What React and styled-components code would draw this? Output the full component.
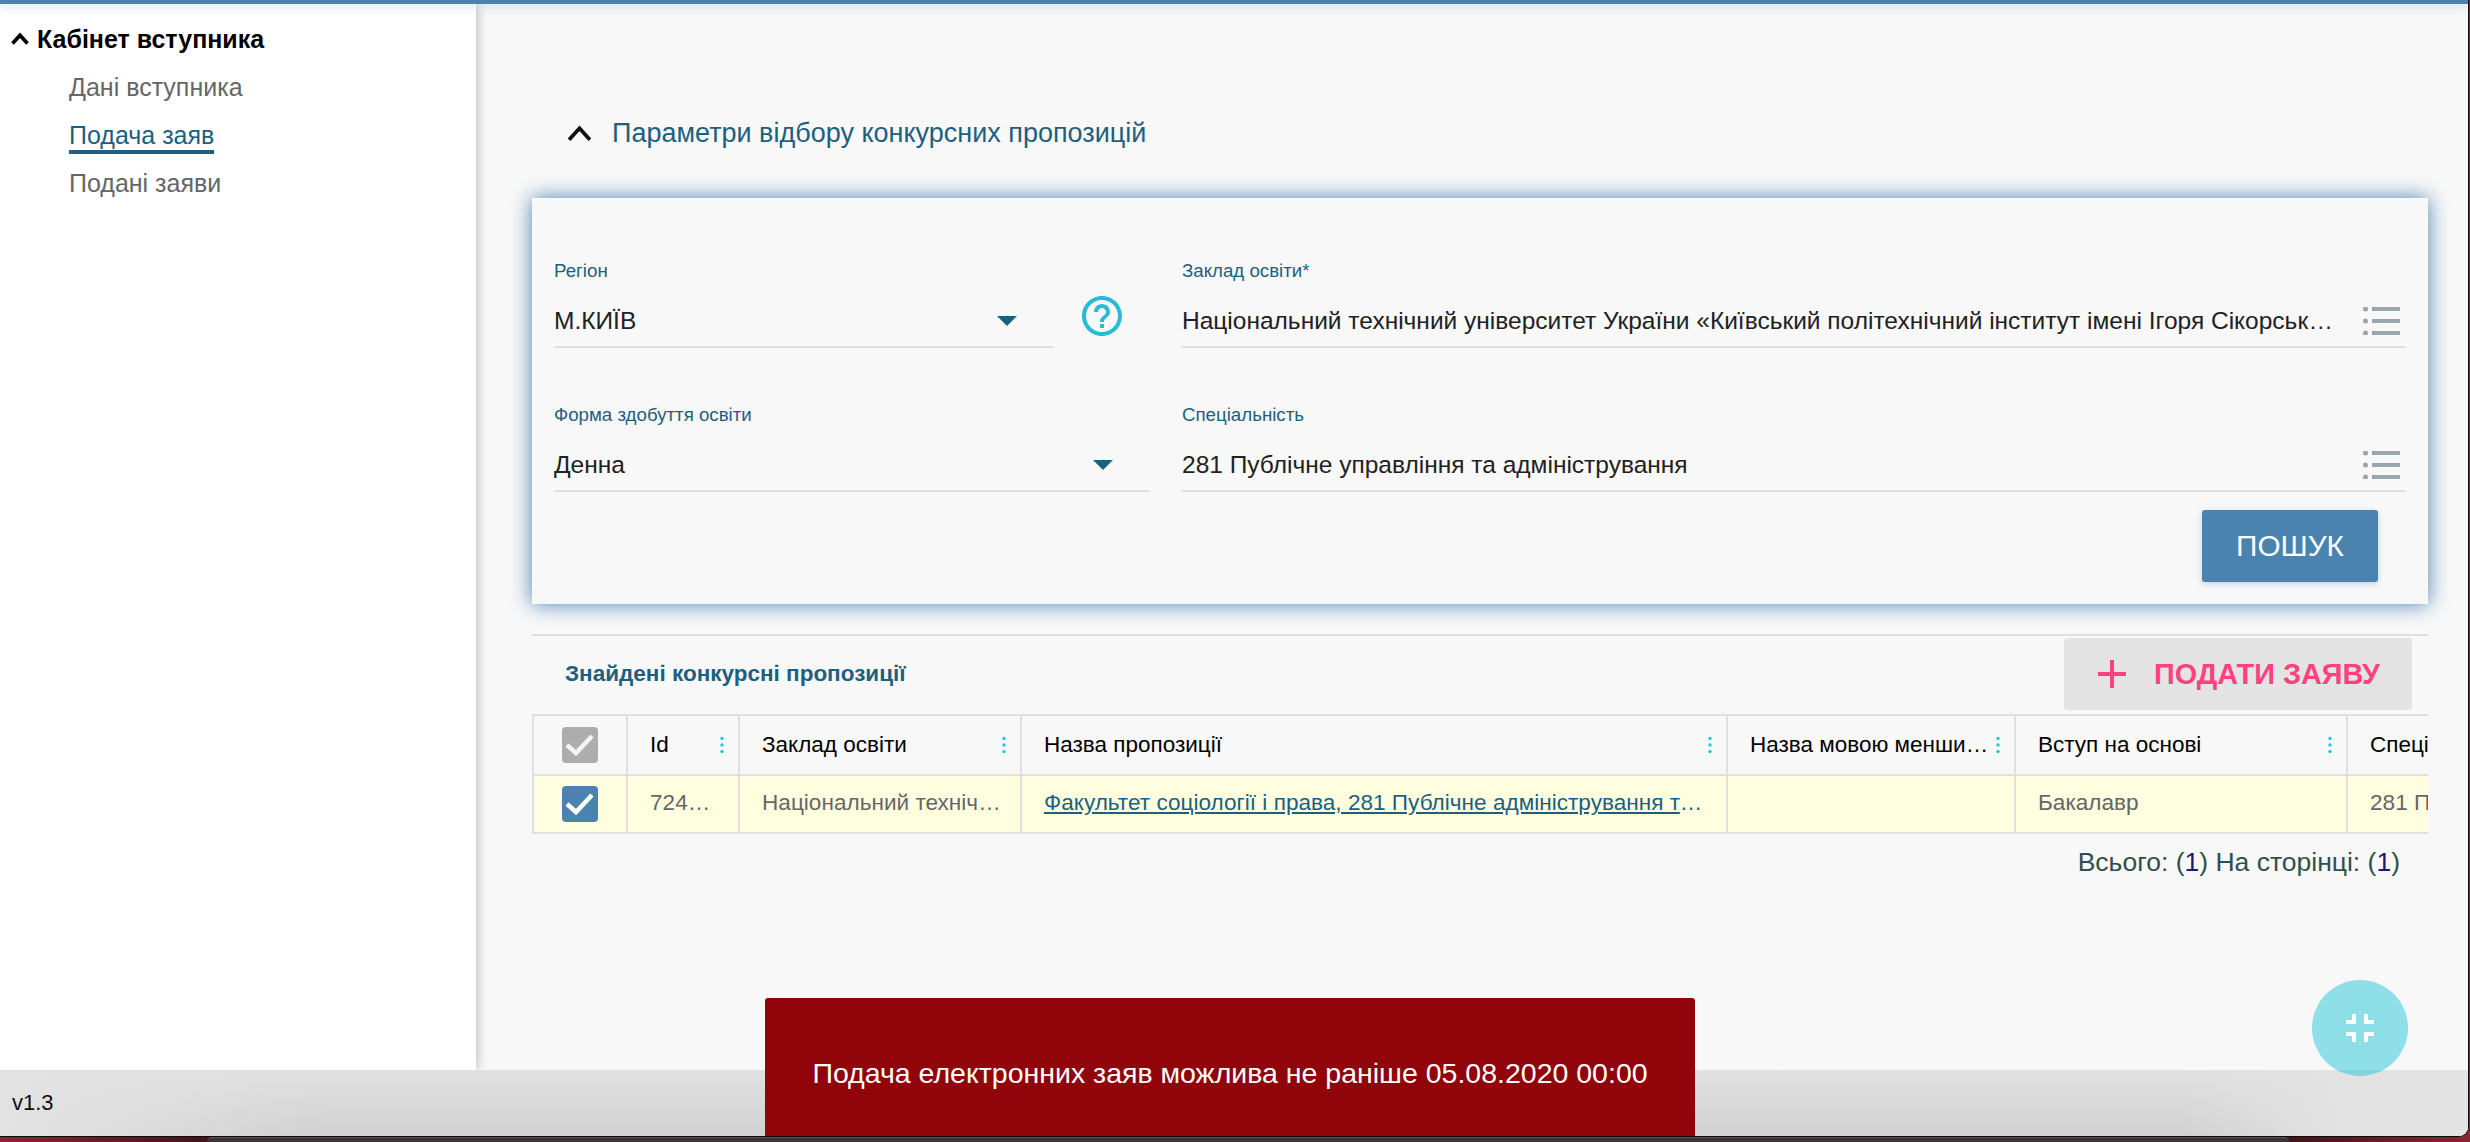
import React from 'react';
import styled, { createGlobalStyle } from 'styled-components';

const GlobalStyle = createGlobalStyle`
  html, body {
    margin: 0;
    padding: 0;
    width: 2470px;
    height: 1142px;
    overflow: hidden;
    font-family: "Liberation Sans", Arial, sans-serif;
  }
  * { box-sizing: border-box; }
`;

const columns = [
  { title: 'Id', value: '724561', dots: true },
  { title: 'Заклад освіти', value: 'Національний технічний університет України', dots: true },
  {
    title: 'Назва пропозиції',
    value: 'Факультет соціології і права, 281 Публічне адміністрування та управління',
    dots: true,
    link: true,
  },
  { title: 'Назва мовою меншин України', value: '', dots: true },
  { title: 'Вступ на основі', value: 'Бакалавр', dots: true },
  { title: 'Спеціальність', value: '281 Публічне управління' },
];

const Desktop = styled.div`
  width: 2470px;
  height: 1142px;
  display: flex;
  flex-direction: column;
  position: relative;
  overflow: hidden;
  background: linear-gradient(90deg, #8a2532 0, #43121a 210px, #43121a 2290px, #8a2532 100%);
`;

const Window = styled.div`
  width: 2469px;
  height: 1137px;
  display: flex;
  flex-direction: column;
  background: #f8f8f8;
  border-right: 1px solid #150a0a;
  border-bottom: 1px solid #0c0c0c;
  border-bottom-right-radius: 10px;
  overflow: hidden;
`;

const TopBar = styled.div`
  height: 4px;
  flex: none;
  background: #4a82b0;
  box-shadow: 0 2px 10px rgba(74, 130, 176, 0.3);
  position: relative;
  z-index: 2;
`;

const Main = styled.div`
  flex: 1;
  min-height: 0;
  display: flex;
`;

const Sidebar = styled.aside`
  width: 476px;
  flex: none;
  padding-top: 15px;
  background: #fff;
  box-shadow: 2px 0 10px rgba(0, 0, 0, 0.22);
  position: relative;
  z-index: 1;
`;

const SideTitle = styled.div`
  height: 40px;
  margin-bottom: 5px;
  padding-left: 11px;
  display: flex;
  align-items: center;
  gap: 8px;
  font-size: 25px;
  font-weight: 700;
  color: #000;
`;

const SideItem = styled.div`
  height: 48px;
  padding: 10px 0 0 69px;
`;

const SideLink = styled.span`
  display: inline-block;
  padding-bottom: 2px;
  font-size: 25px;
  line-height: 26px;
  color: ${(p) => (p.$active ? '#1d5f80' : '#666')};
  border-bottom: ${(p) => (p.$active ? '4px solid #235f85' : 'none')};
`;

const Content = styled.main`
  flex: 1;
  min-width: 0;
  padding: 109px 40px 0 56px;
`;

const SectionTitle = styled.div`
  height: 40px;
  margin-bottom: 45px;
  padding-left: 35px;
  display: flex;
  align-items: center;
  gap: 20px;
  font-size: 27px;
  color: #1d5f80;
`;

const Panel = styled.section`
  height: 406px;
  padding: 62px 22px 22px 22px;
  background: #f8f8f8;
  box-shadow: 0 0 20px #4a82b0;
  display: flex;
  flex-direction: column;
`;

const FieldGrid = styled.div`
  display: grid;
  grid-template-columns: 596px 1224px;
  column-gap: 32px;
  row-gap: 56px;
`;

const HelpRow = styled.div`
  display: flex;
  align-items: flex-end;
  gap: 28px;
`;

const Field = styled.div`
  height: 88px;
  ${(p) => p.$narrow && 'width: 500px;'}
`;

const Label = styled.div`
  height: 22px;
  margin-bottom: 16px;
  font-size: 18.7px;
  line-height: 22px;
  color: #1d5f80;
`;

const ValueRow = styled.div`
  height: 50px;
  padding-bottom: 2px;
  display: flex;
  align-items: center;
  justify-content: space-between;
  border-bottom: 2px solid #e0e0e0;
`;

const Value = styled.div`
  flex: 1;
  min-width: 0;
  font-size: 24.5px;
  color: #212121;
  white-space: nowrap;
  overflow: hidden;
  text-overflow: ellipsis;
`;

const Arrow = styled.span`
  width: 0;
  height: 0;
  flex: none;
  margin-right: 37px;
  border-left: 10px solid transparent;
  border-right: 10px solid transparent;
  border-top: 10px solid #1d5f80;
`;

const HelpIcon = styled.svg`
  width: 48px;
  height: 48px;
  flex: none;
  margin: 0 0 8px -4px;
  color: #26bcd7;
`;

const ListIcon = styled.svg`
  width: 37px;
  height: 28px;
  flex: none;
  margin: 0 6px 0 18px;
  color: #98a6ae;
`;

const SearchRow = styled.div`
  margin-top: 18px;
  padding-right: 28px;
  display: flex;
  justify-content: flex-end;
`;

const SearchButton = styled.button`
  width: 176px;
  height: 72px;
  padding: 0;
  border: none;
  border-radius: 3px;
  background: #4a82b0;
  box-shadow: 0 2px 6px rgba(74, 130, 176, 0.3);
  color: #fff;
  font-family: inherit;
  font-size: 29.7px;
`;

const Toolbar = styled.div`
  margin-top: 30px;
  height: 80px;
  padding: 2px 16px 4px 33px;
  border-top: 2px solid #e0e0e0;
  display: flex;
  align-items: center;
  justify-content: space-between;
`;

const FoundTitle = styled.div`
  font-size: 22.5px;
  font-weight: 700;
  color: #1d5f80;
`;

const SubmitButton = styled.button`
  width: 348px;
  height: 72px;
  padding: 0 0 0 34px;
  border: none;
  border-radius: 4px;
  background: #e4e4e4;
  color: #ff4081;
  display: flex;
  align-items: center;
  gap: 28px;
  font-family: inherit;
  font-size: 28.8px;
  font-weight: 700;
`;

const PlusIcon = styled.svg`
  width: 28px;
  height: 28px;
  flex: none;
`;

const Table = styled.div`
  display: grid;
  grid-template-columns: 94px 112px 282px 706px 288px 332px 300px;
  border-top: 2px solid #e0e0e0;
  border-left: 2px solid #e0e0e0;
  overflow: hidden;
`;

const HeadCell = styled.div`
  height: 60px;
  padding: 0 14px 0 22px;
  display: flex;
  align-items: center;
  justify-content: space-between;
  gap: 3px;
  background: #f8f8f8;
  font-size: 22.5px;
  color: #000;
  border-right: 2px solid #e0e0e0;
  border-bottom: 2px solid #e0e0e0;
  ${(p) => p.$last && 'border-right: none;'}
`;

const HeadText = styled.span`
  flex: 1;
  min-width: 0;
  white-space: nowrap;
  overflow: hidden;
  text-overflow: ellipsis;
`;

const Dots = styled.svg`
  width: 4px;
  height: 18px;
  flex: none;
  color: #26c6da;
`;

const BodyCell = styled.div`
  height: 58px;
  padding: 0 16px 2px 22px;
  display: flex;
  align-items: center;
  background: #ffffe0;
  font-size: 22.6px;
  color: #666;
  border-right: 2px solid #e0e0e0;
  border-bottom: 2px solid #e0e0e0;
  ${(p) => p.$last && 'border-right: none;'}
`;

const BodyText = styled.span`
  flex: 1;
  min-width: 0;
  white-space: nowrap;
  overflow: hidden;
  text-overflow: ellipsis;
`;

const RowLink = styled.a`
  flex: 1;
  min-width: 0;
  white-space: nowrap;
  overflow: hidden;
  text-overflow: ellipsis;
  color: #1d5f80;
  text-decoration: underline;
`;

const CheckCell = styled.div`
  height: ${(p) => (p.$head ? '60px' : '58px')};
  display: flex;
  justify-content: center;
  align-items: center;
  background: ${(p) => (p.$head ? '#f8f8f8' : '#ffffe0')};
  border-right: 2px solid #e0e0e0;
  border-bottom: 2px solid #e0e0e0;
`;

const CheckBox = styled.div`
  width: 36px;
  height: 36px;
  border-radius: 4px;
  background: ${(p) => (p.$muted ? '#adadad' : '#4a82b0')};
  display: flex;
`;

const Summary = styled.div`
  margin-top: 13px;
  padding-right: 28px;
  text-align: right;
  font-size: 26.5px;
  line-height: 30px;
  color: #2f4f4f;
`;

const Count = styled.span`
  color: #1a1a6e;
`;

const Footer = styled.footer`
  height: 66px;
  flex: none;
  padding-left: 12px;
  display: flex;
  align-items: center;
  font-size: 22px;
  color: #111;
  background:
    linear-gradient(90deg, #e3e3e3 0, rgba(227, 227, 227, 0) 330px, rgba(227, 227, 227, 0) 2180px, #e3e3e3 2340px),
    linear-gradient(#e1e1e1, #d1d1d1);
  position: relative;
  z-index: 2;
`;

const Dock = styled.div`
  flex: 1;
  margin: 0 181px 0 207px;
  background: #3f3237;
  border-radius: 8px 8px 0 0;
  border-top: 1px solid #5a5054;
`;

const Toast = styled.div`
  position: absolute;
  left: 765px;
  top: 998px;
  width: 930px;
  height: 138px;
  display: flex;
  align-items: center;
  justify-content: center;
  padding-top: 12px;
  border-radius: 3px 3px 0 0;
  background: #90040a;
  color: #fff;
  font-size: 28.5px;
  z-index: 3;
`;

const Fab = styled.button`
  position: absolute;
  left: 2312px;
  top: 980px;
  width: 96px;
  height: 96px;
  padding: 0;
  border: none;
  border-radius: 50%;
  background: rgba(38, 198, 218, 0.5);
  display: flex;
  align-items: center;
  justify-content: center;
  z-index: 3;
`;

const ChevronIcon = styled.svg`
  width: ${(p) => p.$size}px;
  height: ${(p) => p.$size}px;
  flex: none;
  color: ${(p) => p.$color};
`;

const Chevron = ({ size, width, color = '#111' }) => (
  <ChevronIcon $size={size} $color={color} viewBox="0 0 24 24" fill="none">
    <path d="M2 18 L12 7 L22 18" stroke="currentColor" strokeWidth={width} />
  </ChevronIcon>
);

const Check = ({ opacity = 1 }) => (
  <svg width="36" height="36" viewBox="0 0 36 36" fill="none">
    <path d="M5 18 L14 26 L30 9" stroke="#fff" strokeWidth="4.5" opacity={opacity} />
  </svg>
);

const DotsIcon = () => (
  <Dots viewBox="0 0 4 18" fill="currentColor">
    <circle cx="2" cy="2.4" r="1.7" />
    <circle cx="2" cy="9" r="1.7" />
    <circle cx="2" cy="15.6" r="1.7" />
  </Dots>
);

const ListGlyph = () => (
  <ListIcon viewBox="0 0 37 28" fill="currentColor">
    <ellipse cx="2.5" cy="2" rx="2.5" ry="2.5" />
    <ellipse cx="2.5" cy="14" rx="2.5" ry="2.5" />
    <ellipse cx="2.5" cy="26" rx="2.5" ry="2.5" />
    <rect x="9" y="0" width="28" height="4" />
    <rect x="9" y="12" width="28" height="4" />
    <rect x="9" y="24" width="28" height="4" />
  </ListIcon>
);

export default function App() {
  return (
    <Desktop>
      <GlobalStyle />
      <Window>
        <TopBar />
        <Main>
          <Sidebar>
            <SideTitle>
              <Chevron size={18} width={5} color="#000" />
              Кабінет вступника
            </SideTitle>
            <SideItem><SideLink>Дані вступника</SideLink></SideItem>
            <SideItem><SideLink $active>Подача заяв</SideLink></SideItem>
            <SideItem><SideLink>Подані заяви</SideLink></SideItem>
          </Sidebar>
          <Content>
            <SectionTitle>
              <Chevron size={25} width={3.6} />
              Параметри відбору конкурсних пропозицій
            </SectionTitle>
            <Panel>
              <FieldGrid>
                <HelpRow>
                  <Field $narrow>
                    <Label>Регіон</Label>
                    <ValueRow>
                      <Value>М.КИЇВ</Value>
                      <Arrow />
                    </ValueRow>
                  </Field>
                  <HelpIcon viewBox="0 0 24 24" fill="currentColor">
                    <path d="M11 18h2v-2h-2v2zm1-16C6.48 2 2 6.48 2 12s4.48 10 10 10 10-4.48 10-10S17.52 2 12 2zm0 18c-4.41 0-8-3.59-8-8s3.59-8 8-8 8 3.59 8 8-3.59 8-8 8zm0-14c-2.21 0-4 1.79-4 4h2c0-1.1.9-2 2-2s2 .9 2 2c0 2-3 1.75-3 5h2c0-2.25 3-2.5 3-5 0-2.21-1.79-4-4-4z" />
                  </HelpIcon>
                </HelpRow>
                <Field>
                  <Label>Заклад освіти*</Label>
                  <ValueRow>
                    <Value>Національний технічний університет України «Київський політехнічний інститут імені Ігоря Сікорського»</Value>
                    <ListGlyph />
                  </ValueRow>
                </Field>
                <Field>
                  <Label>Форма здобуття освіти</Label>
                  <ValueRow>
                    <Value>Денна</Value>
                    <Arrow />
                  </ValueRow>
                </Field>
                <Field>
                  <Label>Спеціальність</Label>
                  <ValueRow>
                    <Value>281 Публічне управління та адміністрування</Value>
                    <ListGlyph />
                  </ValueRow>
                </Field>
              </FieldGrid>
              <SearchRow>
                <SearchButton>ПОШУК</SearchButton>
              </SearchRow>
            </Panel>
            <Toolbar>
              <FoundTitle>Знайдені конкурсні пропозиції</FoundTitle>
              <SubmitButton>
                <PlusIcon viewBox="0 0 28 28">
                  <path d="M14 0v28M0 14h28" stroke="currentColor" strokeWidth="4" />
                </PlusIcon>
                ПОДАТИ ЗАЯВУ
              </SubmitButton>
            </Toolbar>
            <Table>
              <CheckCell $head>
                <CheckBox $muted><Check opacity={0.85} /></CheckBox>
              </CheckCell>
              {columns.map((col, i) => (
                <HeadCell key={col.title} $last={i === columns.length - 1}>
                  <HeadText>{col.title}</HeadText>
                  {col.dots && <DotsIcon />}
                </HeadCell>
              ))}
              <CheckCell>
                <CheckBox><Check /></CheckBox>
              </CheckCell>
              {columns.map((col, i) => (
                <BodyCell key={col.title} $last={i === columns.length - 1}>
                  {col.link ? <RowLink href="#">{col.value}</RowLink> : <BodyText>{col.value}</BodyText>}
                </BodyCell>
              ))}
            </Table>
            <Summary>
              Всього: (<Count>1</Count>) На сторінці: (<Count>1</Count>)
            </Summary>
          </Content>
        </Main>
        <Footer>v1.3</Footer>
      </Window>
      <Dock />
      <Toast>Подача електронних заяв можлива не раніше 05.08.2020 00:00</Toast>
      <Fab aria-label="Згорнути">
        <svg width="48" height="48" viewBox="0 0 24 24" fill="#fff">
          <path d="M5 16h3v3h2v-5H5v2zm3-8H5v2h5V5H8v3zm6 11h2v-3h3v-2h-5v5zm2-11V5h-2v5h5V8h-3z" />
        </svg>
      </Fab>
    </Desktop>
  );
}
